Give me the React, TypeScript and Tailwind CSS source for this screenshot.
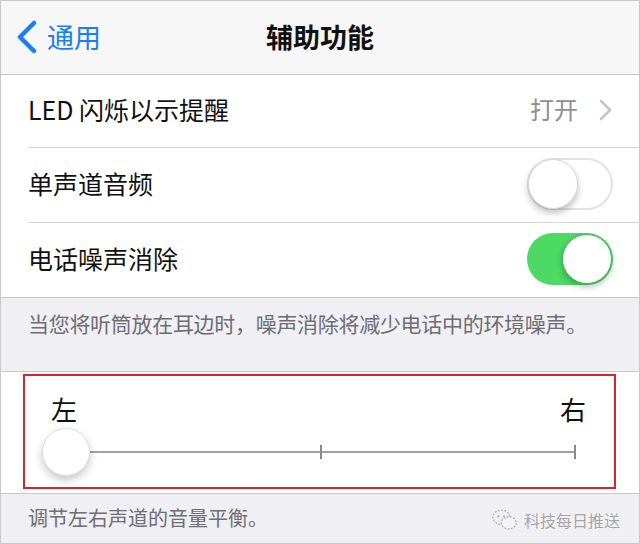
import React from "react";

const font = { fontFamily: '"Noto Sans CJK SC", "Noto Sans", sans-serif' };

function Toggle({ on }: { on: boolean }) {
  if (on) {
    return (
      <div className="relative w-[86px] h-[52px] rounded-full bg-[#4cd964]">
        <div className="absolute right-[1px] top-[1px] w-[50px] h-[50px] rounded-full bg-white border border-[#3cb954] shadow-[0_3px_6px_rgba(0,0,0,0.25)]" />
      </div>
    );
  }
  return (
    <div className="relative w-[86px] h-[52px] rounded-full bg-white border-2 border-[#e3e3e6]">
      <div className="absolute left-[-1px] top-[-1px] w-[50px] h-[50px] rounded-full bg-white border border-[#d8d8d8] shadow-[0_4px_7px_rgba(0,0,0,0.25)]" />
    </div>
  );
}

export default function App() {
  return (
    <div
      className="w-[640px] h-[544px] overflow-hidden bg-[#efeff4] border border-[#c9c9c9] flex flex-col"
      style={font}
    >
      {/* Nav bar */}
      <div className="h-[74px] shrink-0 bg-[#f7f7f8] border-b border-[#c8c7cc] flex items-center relative pb-[3px]">
        <div className="flex items-center pl-[14px] text-[#1a7ef5]">
          <svg width="24" height="34" viewBox="0 0 24 34" className="mt-[2px]">
            <path d="M19 3 L5 17 L19 31" fill="none" stroke="#1a7ef5" strokeWidth="4.5" strokeLinecap="round" strokeLinejoin="round" />
          </svg>
          <span className="ml-[8px] text-[27px] leading-none">通用</span>
        </div>
        <div className="absolute left-0 right-0 top-0 bottom-[3px] flex items-center justify-center pointer-events-none">
          <span className="text-[27px] font-bold text-[#111] leading-none">辅助功能</span>
        </div>
      </div>

      {/* List */}
      <div className="bg-white shrink-0 border-b border-[#c8c7cc]">
        <div className="h-[72px] flex items-center pl-[27px] pr-[26px]">
          <span className="flex-1 text-[25px] text-[#111] leading-none pb-[4px]">LED 闪烁以示提醒</span>
          <span className="text-[24px] text-[#8e8e93] leading-none pb-[4px]">打开</span>
          <svg width="14" height="22" viewBox="0 0 14 22" className="ml-[21px] mb-[2px]">
            <path d="M2 2 L11 11 L2 20" fill="none" stroke="#c4c4c9" strokeWidth="2.5" strokeLinecap="round" strokeLinejoin="round" />
          </svg>
        </div>
        <div className="ml-[27px] h-px bg-[#d4d4d8]" />
        <div className="h-[74px] flex items-center pl-[27px] pr-[26px]">
          <span className="flex-1 text-[25px] text-[#111] leading-none pb-[4px]">单声道音频</span>
          <div className="mb-[2px]">
            <Toggle on={false} />
          </div>
        </div>
        <div className="ml-[27px] h-px bg-[#d4d4d8]" />
        <div className="h-[74px] flex items-center pl-[27px] pr-[26px]">
          <span className="flex-1 text-[25px] text-[#111] leading-none pb-[4px]">电话噪声消除</span>
          <div className="mb-[2px]">
            <Toggle on={true} />
          </div>
        </div>
      </div>

      {/* Footer note */}
      <div className="h-[73px] shrink-0 pl-[27px] pt-[11px] text-[21px] text-[#6d6d72] leading-[28px] tracking-[-0.3px]">
        当您将听筒放在耳边时，噪声消除将减少电话中的环境噪声。
      </div>

      {/* Balance section */}
      <div className="bg-white shrink-0 border-t border-b border-[#c8c7cc] h-[123px] pt-[2px] pl-[22px] pr-[23px]">
        <div className="border-2 border-[#d5262c] h-[115px] flex flex-col pl-[26px] pr-[28px] pt-[18px]">
          <div className="flex justify-between text-[26px] text-[#111] leading-[30px]">
            <span>左</span>
            <span>右</span>
          </div>
          <div className="relative h-[48px] mt-[4px]">
            <div className="absolute left-[20px] right-[10px] top-[23px] h-[2px] bg-[#a0a0a0]" />
            <div className="absolute left-[269px] top-[17px] w-[2px] h-[14px] bg-[#8a8a8a]" />
            <div className="absolute right-[10px] top-[17px] w-[2px] h-[14px] bg-[#8a8a8a]" />
            <div className="absolute left-[-9px] top-0 w-[48px] h-[48px] rounded-full bg-white border border-[#e0e0e0] shadow-[0_4px_8px_rgba(0,0,0,0.22)]" />
          </div>
        </div>
      </div>

      {/* Bottom note */}
      <div className="flex-1 flex items-start pl-[27px] pr-[19px] pt-[10px]">
        <span className="flex-1 text-[20px] text-[#6d6d72] leading-[28px]">调节左右声道的音量平衡。</span>
        <div className="flex items-center mt-[4px]">
          <svg width="28" height="24" viewBox="0 0 30 24">
            <g fill="none" stroke="#b0b0b0" strokeWidth="1.4" strokeDasharray="2 1.5">
              <ellipse cx="11" cy="9" rx="9" ry="7.5" />
              <ellipse cx="19" cy="15" rx="8" ry="6.5" fill="#f4f4f6" />
            </g>
            <circle cx="8" cy="8" r="1.2" fill="#b0b0b0" />
            <circle cx="14" cy="8" r="1.2" fill="#b0b0b0" />
          </svg>
          <span className="ml-[5px] text-[16px] text-[#a4a4a4] leading-none [text-shadow:0_0_2px_#fff]">科技每日推送</span>
        </div>
      </div>
    </div>
  );
}
